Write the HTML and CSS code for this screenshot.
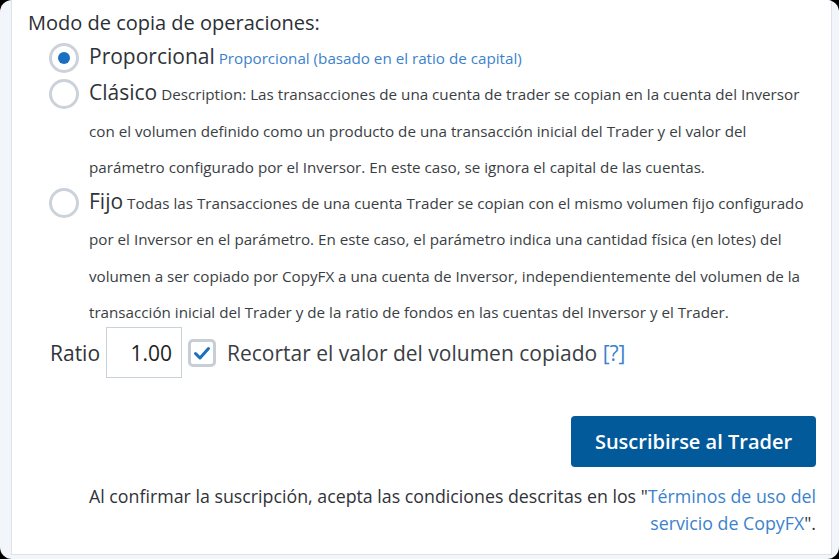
FILE: index.html
```html
<!DOCTYPE html>
<html lang="es">
<head>
<meta charset="utf-8">
<link rel="stylesheet" href="styles.css">
</head>
<body>
<div class="frame">
  <div class="card">
    <h2 class="title">Modo de copia de operaciones:</h2>
    <div class="options">
      <div class="option">
        <span class="radio checked"></span>
        <p class="opt-text"><span class="opt-name">Proporcional</span> <span class="blue">Proporcional (basado en el ratio de capital)</span></p>
      </div>
      <div class="option">
        <span class="radio"></span>
        <p class="opt-text"><span class="opt-name">Clásico</span> Description: Las transacciones de una cuenta de trader se copian en la cuenta del Inversor con el volumen definido como un producto de una transacción inicial del Trader y el valor del parámetro configurado por el Inversor. En este caso, se ignora el capital de las cuentas.</p>
      </div>
      <div class="option">
        <span class="radio"></span>
        <p class="opt-text"><span class="opt-name">Fijo</span> Todas las Transacciones de una cuenta Trader se copian con el mismo volumen fijo configurado por el Inversor en el parámetro. En este caso, el parámetro indica una cantidad física (en lotes) del volumen a ser copiado por CopyFX a una cuenta de Inversor, independientemente del volumen de la transacción inicial del Trader y de la ratio de fondos en las cuentas del Inversor y el Trader.</p>
      </div>
    </div>
    <div class="ratio-row">
      <span class="ratio-label">Ratio</span>
      <span class="ratio-input">1.00</span>
      <span class="checkbox">
        <svg viewBox="0 0 20 20" width="20" height="20"><path d="M3.5 10.5 L8 15 L16.5 5.5" fill="none" stroke="#1b6fbf" stroke-width="3" stroke-linecap="round" stroke-linejoin="round"/></svg>
      </span>
      <span class="check-label">Recortar el valor del volumen copiado <span class="blue">[?]</span></span>
    </div>
    <div class="actions">
      <button class="btn">Suscribirse al Trader</button>
    </div>
    <p class="terms">Al confirmar la suscripción, acepta las condiciones descritas en los "<span class="blue">Términos de uso del servicio de CopyFX</span>".</p>
  </div>
</div>
</body>
</html>
```

FILE: styles.css
```css
html, body {
  margin: 0;
  padding: 0;
  background: #000;
}
body {
  font-family: "Open Sans", "Liberation Sans", sans-serif;
  color: #2f3338;
}
.frame {
  width: 839px;
  height: 559px;
  box-sizing: border-box;
  background: #f2f6fa;
  border-radius: 12px;
  overflow: hidden;
  padding: 0 7px 4px 11px;
}
.card {
  height: 100%;
  box-sizing: border-box;
  background: #fff;
  border: 1px solid #dce3ea;
  border-top: none;
  padding: 8px 15px 0 16px;
}
.title {
  margin: 0;
  font-size: 20px;
  font-weight: 400;
  line-height: 30px;
  color: #2b2f33;
}
.options {
  padding-left: 21px;
  margin-top: 2px;
}
.option {
  display: flex;
  align-items: flex-start;
  gap: 10px;
}
.radio {
  flex: none;
  width: 24px;
  height: 24px;
  border: 3px solid #ccd2da;
  border-radius: 50%;
  margin-top: 3px;
  position: relative;
  background: #fff;
}
.radio.checked::after {
  content: "";
  position: absolute;
  left: 50%;
  top: 50%;
  width: 12px;
  height: 12px;
  margin: -6px 0 0 -6px;
  border-radius: 50%;
  background: #1a6fc0;
}
.opt-text {
  margin: 0;
  font-size: 15.2px;
  line-height: 36.3px;
  color: #3a3e43;
}
.opt-name {
  font-size: 21px;
  line-height: 20px;
  color: #2f3338;
}
.blue {
  color: #3b82cc;
}
.ratio-row {
  display: flex;
  align-items: center;
  padding-left: 22px;
  margin-top: -3px;
  font-size: 21px;
}
.ratio-label {
  margin-right: 6px;
  color: #2f3338;
}
.ratio-input {
  width: 76px;
  height: 51px;
  box-sizing: border-box;
  border: 1px solid #c9d1d9;
  display: flex;
  align-items: center;
  justify-content: flex-end;
  padding-right: 9px;
  font-size: 21px;
  color: #222;
}
.checkbox {
  width: 28px;
  height: 28px;
  box-sizing: border-box;
  border: 3px solid #c8ced6;
  border-radius: 5px;
  margin: 0 11px 0 6px;
  display: flex;
  align-items: center;
  justify-content: center;
}
.check-label {
  color: #3a3e43;
}
.actions {
  display: flex;
  justify-content: flex-end;
  margin-top: 38px;
}
.btn {
  width: 245px;
  height: 51px;
  border: none;
  border-radius: 4px;
  background: #035a9b;
  color: #fff;
  font-family: inherit;
  font-size: 20px;
  font-weight: 600;
}
.terms {
  margin: 16px 0 0 0;
  text-align: right;
  font-size: 17.8px;
  line-height: 27px;
  color: #2f3338;
  padding-left: 57px;
}
```
